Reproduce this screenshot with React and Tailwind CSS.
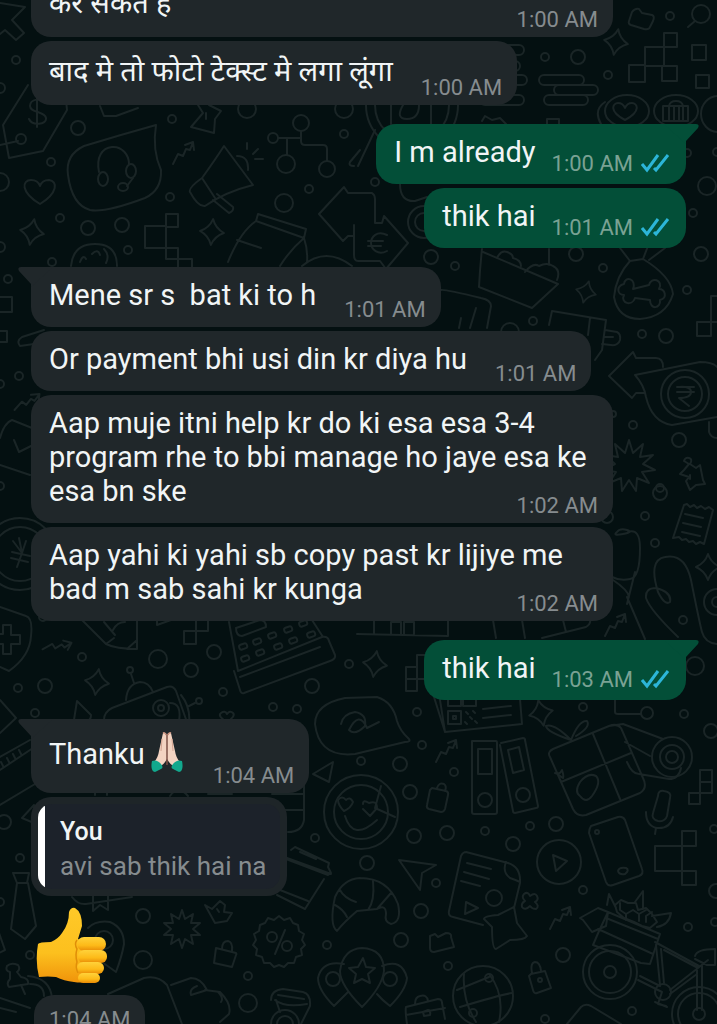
import clsx from "clsx";

const circles = [
  [16, 60, 4], [0, 88, 5], [78, 128, 7], [51, 162, 4], [21, 139, 5], [172, 119, 4],
  [170, 197, 4], [60, 218, 4], [88, 228, 7], [122, 225, 7], [128, 250, 4], [301, 123, 8],
  [273, 138, 5], [286, 164, 9], [327, 169, 8], [344, 134, 4], [309, 189, 4], [284, 203, 9],
  [247, 109, 9], [344, 109, 9], [0, 182, 9], [0, 247, 5], [52, 262, 4], [8, 279, 4],
  [19, 376, 4], [0, 384, 4], [0, 486, 4], [20, 554, 36], [20, 554, 27], [82, 657, 4],
  [158, 659, 9], [191, 670, 7], [214, 652, 7], [18, 688, 4], [45, 686, 7], [223, 692, 4],
  [273, 707, 4], [297, 709, 4], [349, 664, 4], [312, 686, 7], [35, 713, 4], [43, 617, 4],
  [130, 670, 3], [161, 708, 8], [161, 708, 3], [199, 701, 3], [128, 728, 8],
  [660, 493, 7], [645, 516, 4], [607, 517, 6], [655, 543, 4], [683, 620, 4], [695, 666, 9],
  [417, 712, 4], [583, 707, 4], [684, 714, 4], [647, 713, 6], [717, 602, 13], [717, 602, 5],
  [670, 16, 4], [701, 14, 9], [545, 57, 4], [578, 57, 7], [608, 75, 4], [687, 153, 4],
  [707, 186, 9], [693, 213, 4], [375, 182, 4], [717, 152, 4], [424, 222, 9], [424, 222, 16],
  [412, 105, 46], [412, 105, 37], [431, 257, 7], [455, 266, 4], [576, 254, 7], [603, 268, 4],
  [701, 254, 7], [687, 290, 4], [533, 321, 4], [642, 334, 4], [666, 336, 7], [633, 425, 4],
  [679, 440, 7], [510, 332, 9], [613, 414, 3], [660, 488, 4], [685, 394, 24], [685, 394, 17],
  [422, 745, 4], [400, 764, 7], [361, 761, 4], [454, 772, 4], [410, 792, 7], [447, 833, 7],
  [414, 836, 7], [485, 831, 4], [530, 826, 4], [556, 824, 7], [513, 844, 7], [367, 863, 7],
  [436, 883, 4], [421, 911, 7], [583, 890, 4], [401, 940, 7], [448, 966, 4], [563, 955, 7],
  [688, 927, 4], [632, 1011, 4], [545, 1019, 4], [711, 731, 7], [714, 829, 4], [716, 891, 7],
  [715, 922, 4], [4, 822, 7], [20, 858, 4], [315, 838, 4], [143, 916, 7], [143, 960, 9],
  [248, 976, 4], [248, 1003, 9], [327, 945, 4], [30, 955, 4], [0, 902, 4],
  [485, 800, 7], [523, 795, 7], [672, 757, 20], [672, 757, 12], [672, 757, 6],
  [361, 812, 37], [361, 812, 27], [494, 898, 8], [559, 862, 22], [272, 937, 5], [287, 946, 5],
  [610, 972, 27], [610, 972, 21], [610, 972, 6], [699, 1014, 27], [699, 1014, 21], [699, 1014, 6],
  [483, 996, 30], [489, 978, 4], [473, 1013, 4], [390, 979, 7], [333, 979, 7], [663, 992, 8],
  [285, 1024, 14], [285, 1024, 8], [104, 940, 9], [540, 980, 2], [597, 832, 2],
];

const sparkles = [
  "translate(32 232) rotate(10)", "translate(212 232) rotate(5)", "translate(616 42) rotate(10)",
  "translate(586 292) scale(.85) rotate(15)", "translate(97 682) rotate(8)",
  "translate(375 664) rotate(8)", "translate(541 713) rotate(-12)", "translate(708 567)",
];

const squares = [
  [145, 226, 21, 22], [166, 214, 12, 13], [166, 248, 12, 11], [178, 259, 14, 12],
  [-6, 297, 18, 15], [-6, 331, 13, 11], [184, 631, 12, 13], [196, 618, 12, 13],
  [664, 33, 13, 14], [645, 47, 19, 19], [629, 65, 16, 17], [662, 66, 15, 15],
  [692, 45, 14, 15], [696, 75, 13, 13], [547, 119, 12, 12], [697, 322, 14, 14],
  [711, 296, 12, 26], [406, 667, 11, 12], [406, 679, 11, 12], [417, 655, 12, 24],
  [448, 711, 13, 13], [453, 716, 3, 3], [448, 693, 13, 13], [463, 693, 13, 13],
  [700, 770, 12, 12], [700, 782, 12, 11], [689, 793, 11, 11],
  [655, 846, 27, 25], [682, 831, 14, 15], [682, 871, 14, 14], [682, 846, 0, 25],
];

const trendArrows = [
  "translate(183 153)", "translate(57 646) rotate(35)", "translate(615 625)",
  "translate(446 751)", "translate(560 918)", "translate(27 402) rotate(15)",
];

const doodles = [
  // cursor, price tag, paper
  "M0 3L25 7L12 20L24 33L16 40L5 30L0 34",
  "M28 85L3 125L9 158L43 151L67 110L66 100M45 103c-3-6-15-4-15 3s15 5 16 12-14 8-17 1M37 97v30M0 145L18 141",
  "M100 106l4 10h12l22-8M198 105l5 8-12 14 23 6 1-14 6-8-12-6M206 113v6",
  // headset in a speech bubble
  "M156 125Q120 135 84 146Q65 155 68 175Q72 205 90 210Q105 213 145 198Q162 190 161 170Q152 150 156 125Z",
  "M99 172c-3-15 3-24 13-25s17 8 17 17M133 178l-6 8",
  "M40 204C20 192 22 180 31 180Q38 180 40 186Q42 180 49 180C58 181 58 193 40 204Z",
  // megaphone
  "M224 146L253 185Q225 192 205 206Q198 207 190 192Q188 188 202 178Q215 160 224 146ZM202 178L215 198M213 200l16 13q5-2 4-6l-16-13M237 156q12 0 11 14M247 143v6M258 149l-5 5M255 159h8",
  // network
  "M278 138h23M287 139v16M301 131v10q0 4 4 4h18q4 0 4 4v12M360 150l-10 12q-2 4 4 4",
  // jar and arrows
  "M258 214L306 229L304 238L256 221ZM256 221Q240 232 228 262M304 238Q290 250 280 266M237 240l24 8M304 238q4 12 3 24M302 266q24-20 50 0",
  "M360 193H348L344 187L319 214L343 241L348 236H354M360 193h12q3 2 3 6v24h7l2-7 24 27-22 26-6-8H358q-4 0-4-6v-30M387 235c-10-5-16 2-16 8s7 13 16 8M368 241h15M368 246h13",
  "M71 266q2-22 24-22t22 22M80 262q3-8 6-3M92 254q6-6 8 1M104 249q6 6 2 14",
  "M44 330L22 337q-6 4-2 9l14-2M0 438q4-15 12-18l20 8M14 440l5 12 20-10M0 465l30 10",
  // yen and shield
  "M19 538l3 15M13 541l9 12 4-12M22 553l-5 14M12 552l18 4M11 558l17 4",
  "M0 607l26 9q7 2 5 20q-1 20-22 35L0 667M-3 634h6v-9h8v10h9v9h-9v10h-8v-10h-6",
  "M82 620l24 24q10 5 31 5v-29M106 644l8-6M127 649l10-9M104 622l11 13M113 630q4-8 12-8M157 620v5l14-5",
  // cash register
  "M229 622l9 49M238 671l84-34q6-1 7 4l6 14q1 4-5 6l-86 32q-3 1-4-3l-6-19M312 620l11 17M240 677l80-30M236 628l24-8q6 0 6 7l-24 9q-6 0-6-8",
  // robot, triangle
  "M77 701l14 14q0 5-4 6l-14 5ZM104 720q0-8 8-12l55-21q6-2 9 4l12 34M131 674l3 9M126 700q1-16 14-18q9 0 13 10M170 703q12 0 9 18M181 695q10 12 8 30M189 706l6-3M0 700l16 18-16 15",
  "M227 722q-10-6-6-9t6 1q3-4 6-1t-6 9",
  // folder, search
  "M632 12q3-4 7-3l3 4 10 2q3 1 1 6l-3 6q-1 3-6 2l-13-4q-3-1-2-4ZM695 21l-7 6",
  "M625 120c-17-9-12-17-7-17q5 0 7 5q2-5 7-5c5 0 10 8-7 17M663 106h25v15h-25ZM669 121v-15q1-5 7-5t7 5v15M674 106v15M679 106v15M601 124q-8-14 4-22M391 105v20h40v-20M403 105q-8 14 4 14t12-14M375 130l-17 36M482 121l3-5 7 4 8-2 6 6",
  "M400 184q0 18 15 17l12-4",
  // basket, books, bottle, mug
  "M483 252l75 32-26 24-53-21q1-20 3-38M497 258q4-8 10-6t6 6q8 2 8 8M525 272q8-10 14-6 8-4 14 0 8 4 4 14M549 249v16",
  "M441 290q3-1 40 8q10 2 10 8l-4 22M461 318l-2 10M476 308l-6 20",
  "M620 248l10 13M648 246l-5 13M665 248l-16 12M630 261q-14 15-16 36q4 22 26 22q26-2 33-25q-2-18-30-35l-13 2",
  "M633 289c4-10-8-14-9-5-8 2-7 11 0 11-4 8 8 12 11 3l15 2c0 10 11 9 10 0 8-2 5-11-1-11 5-9-8-13-10-4Z",
  "M549 325l3-14 54 9-4 30-7 10M590 318l-2 17M605 330l12 2q4 2 3 8q-2 6-9 5l-9-1M605 337h8",
  "M644 393h-8l-4 5-23-22 24-24 3 6h20q7 0 7 9M635 375L700 362Q713 362 717 367M635 375q9 10 11 22q6 25 26 28L717 417M677 387h17M677 392h17M679 387q12-1 12 5q0 6-12 6l10 8M709 422v10q2 6 8 6",
  "M684 470l5-6-5-3q1-4 5-3t1 6l6 4 4-3 3 15 2 4-9 1-6 5-4-9 3-4-9-3ZM690 475v4",
  // receipt, lace
  "M684 505l3-1 3 3 4-2 3 3 4-2 4 3 4-2 4 3-9 34-4-2-4 2-3-3-4 1-3-3-4 1-3-3-6 1ZM685 514l18 4M683 523l18 4M682 532l18 4",
  "M628 532q12-4 12 16q0 30-10 31q-10 2-18-2M613 580q15 10 16 17M635 572l-8 32M627 597l18 42M617 532q3-4 10-2t-4 4-6-2",
  "M678 637Q650 610 646 598Q645 588 656 588Q672 592 670 602Q665 606 658 592Q648 560 665 557Q685 553 691 580Q700 625 702 632Q705 643 717 644",
  "M357 634l91 2V620M374 620v14M391 634v-12h10v12M404 634v-12h10v12M493 620l3 18M522 620l3 18M563 620l3 12M542 638l44-11q5-3 4-7",
  // card with code
  "M434 697l11 35 77-8-2-25M440 700l5 32M483 709l28-3M483 718l28-3M466 712l2 2M473 711l2 2M470 717l2 2M465 722l2 2M475 721l2 2M615 699v13q0 2 3 2h23",
  // abstract bubble above the donut
  "M315 724q0-20 30-26l32-1q16 5 20 24q3 10 12 18q2 3-4 3l-50 12q-36 4-40-30M341 724q2-10 14-12 12 2 10 14-10 10-16 4 10-20 18-2l12-6",
  // binders
  "M472 741h24q1 0 1 2v69q0 2-2 2h-21q-2 0-2-2ZM478 749h14v25h-14ZM501 743l22-5q2 0 2 2l13 66q0 2-2 2l-21 5q-2 0-2-2l-13-66M508 750l11-3 5 23-11 3Z",
  // gift
  "M550 757q-3-5 3-8l56-23q8-3 12 2l22 50q5 10-3 15l-54 22q-9 2-13-6ZM561 782l70-29M593 734l27 65M571 740q-24-8-25-14 8-3 25 14q8-20 16-19 4 6-11 15M609 726l14-2 40 15M625 742l25 14M627 762q5 12 12 12l30 5q10 0 12-11",
  "M555 773q5 2 7-3 2 6 1 8-5-3-6-5M658 796q0-6 6-5 8 1 6 7l-3 18q-2 6-9 5-7-2-5-8ZM646 812q0 14 11 16 13 1 16-11M656 828l-1 6",
  "M580 796q-6-4 0-14 8-10 16-6 6 6-4 20-6 8-12 0",
  // lock, play, phone
  "M432 788l14 3q3 1 2 4l-3 14q-1 3-4 3l-12-3q-3-1-2-4l3-15ZM437 788q2-6 7-4 3 2 1 7",
  "M553 855l14 6-11 10ZM591 826l27-9q5-1 7 3l17 49q2 5-3 7l-26 9q-5 2-7-3l-17-49q0-4 2-7ZM618 871q1-4 8-3 4 2-1 6-6 1-7-3",
  "M399 860l37 5-14 8-2 17Z",
  // document and star
  "M466 852q-3 0-5 4l-12 55q-1 5 4 6l30 8M466 852l42 11q13 4 12 20l-6 25M506 862q-4 10 4 16 6 2 10 4M467 863l24 6M464 872l25 7M461 881l19 5M466 902l12 6-13 6Z",
  "M514 907l3 16 10 13q-2 4-17 4l-14 9q-4 0-4-22l-8-8q0-3 14-4Z",
  "M524 894q4-3 6 2 5-4 7 0t-2 6q5 4 1 7-4 0-6-3-5 5-8 1-1-4 3-6-4-4-1-7",
  "M430 936l5-2 3 3 8-4q6 0 5 4l3 10-20 5q-4 0-4-4ZM531 974l14-3 6 17-14 5q-3 1-4-3l-4-14ZM532 973q-2-10 3-11 5 0 6 9",
  // croissant
  "M360 878q28 0 38 26 4 18-7 20-7-2-5-10 0-10-9-5l-20 2q-14 12-20 20-8-6-2-34 8-18 25-19M373 881q2 20-5 29M391 893l-14 16M340 890q4 8 16 12M335 905q8 4 12 12",
  // map pins and star
  "M362 1007q-22-22-22-36 3-22 22-23 22 1 22 23-2 16-22 36M363 958l3 9 9 1-7 6 2 9-8-4-8 4 2-9-7-6 9-1ZM382 966q20-8 25 12-1 12-17 28-8-6-13-12M344 964q-22-4-26 14 0 12 16 28 8-8 14-14",
  "M406 1007l32-8q4 0 4 4l3 16M406 1007q-1 3 1 17M415 1004q0-7 5-8 7-2 8 5M406 1015l39-7M423 1012l5-2q3 1 2 5l-6 1Z",
  // globe
  "M464 974q-2 26 12 48M489 974q16 20 10 48M457 990l32-13M460 1007q40-12 52-14",
  "M567 1024l14-17q4-4 10-1l30 18",
  // cart with fruit and bicycle
  "M580 918l18-10 10 4-2 14-14 6-9-12ZM608 912l52 22-10 30-9-1-48-18 6-14ZM598 929l55 25M606 918l52 21M607 905l2-11 7 14M635 902l8-11v18M652 916l19-3q-2 12-14 14M615 905l6-5 7 3 8 0 2 7 8-2 6 6 5 8-7 6-8-2-8-4-10-4-7-6Z",
  "M620 903v7l6 4 7-4M626 914v6M633 910l6 4v7M639 914l7-4M646 922v-6l6-4",
  "M638 980l24 12M640 976l20 10M656 945l4 40M661 949l3 34M655 942l44 24M664 950l34 18-28 22M697 974l-27 20M697 966v44M702 966v44M698 968l10-8M695 956q2-7 20-7v16l-8 0-12-6M662 992l-4 12 8 2M655 1002l12 5",
  // left edge ruler, tie, pushpin
  "M0 757l30-17M0 770l36-24M3 766l-2-4M9 762l-2-4M15 758l-2-4M21 754l-2-4M0 805l40-24M22 818l12-13v18Z",
  "M13 873h16l-2 10H17ZM17 883l-6 46 14 10 11-13-8-43M-2 930l7 20-6 3",
  "M7 966q4-4 11-1 3 4-1 7l4 5q8 1 7 7l-19 3q-3-4 1-8l0-7q-5-1-3-6M21 985l4 9M28 976q22 2 24 22M30 984q14 0 14 12M0 998l30 10M0 1008l16 4",
  // bookmark, pin, boot
  "M72 897q6 8 14 7l46-7M93 896v15l7-6 8 5v-15M88 928q8-8 22-6 14 6 14 22-2 12-8 28l-14-10",
  "M108 994l36-16q14-3 23 7l15 39M171 985l20-7q10 0 16 12l-16 5q-2-6 6-9M205 990l15 2q12 12 9 22l-9 8M218 992q6 6 3 10",
  "M205 905l7 4 8-8 5 4-1 7 8 1-5 8-12 2ZM217 909l2 3",
  "M216 948l20 5q1 1 0 2l-4 12-18-4ZM222 949q0-8 6-8 5 1 4 10",
  "M285 930l-10 24",
  // coffee cup
  "M291 850l4-3 34 16-1 4 3 6-3 2-42-16M287 858l44 16M324 879l-19 30-28-14M280 890l28 11M272 794h32M272 810h32M304 785v35q-2 12-16 12M300 852l16 7",
  "M271 1000q0-10 12-11l20 3q8 2 7 14l-9 18M275 1000q10 8 32 4M278 995l26 4M276 1000l4 12M313 774l20-12-4 20Z",
  "M338 800q4-5 8 0 4-4 7 2-2 6-9 9-6-6-6-11M363 804q0-5 6-1 8-3 8 5l-7 8-7-7M345 816q8 26 32 4M381 786l-6 22 20 9",
  "M95 780v15M107 780v15M170 796q8-12 18 0M208 794h24",
];

const keys = [
  [243, 646], [257, 641], [272, 635], [288, 629], [303, 623],
  [245, 658], [260, 652], [278, 646], [293, 640], [311, 634],
];

const pills = [
  [539, 75, 45], [554, 85, 44], [544, 95, 44], [480, 45, 44], [480, 61, 40], [480, 75, 47], [480, 95, 44],
];

const burst = (cx, cy, outer, inner, points) =>
  Array.from({ length: points * 2 }, (_, i) => {
    const r = i % 2 ? inner : outer;
    const a = (i * Math.PI) / points - Math.PI / 2;
    return `${Math.round(cx + r * Math.cos(a))},${Math.round(cy + r * Math.sin(a))}`;
  }).join(" ");

const Wallpaper = () => {
  return (
    <svg
      aria-hidden="true"
      viewBox="0 0 717 1024"
      preserveAspectRatio="xMidYMin slice"
      className="col-start-1 row-start-1 w-full h-full fill-none stroke-[#1a2526] stroke-2"
      strokeLinejoin="round"
      strokeLinecap="round"
    >
      {circles.map(([cx, cy, r], i) => (
        <circle key={i} cx={cx} cy={cy} r={r} />
      ))}
      {squares.map(([x, y, w, h], i) => (
        <path key={i} d={`M${x} ${y}h${w}v${h}h${-w}Z`} />
      ))}
      {sparkles.map((t) => (
        <path key={t} transform={t} d="M0-13Q3-4 12 0Q3 4 0 13Q-3 4-12 0Q-3-4 0-13Z" />
      ))}
      {trendArrows.map((t) => (
        <path key={t} transform={t} d="M-10 11l5-10 5 2 3-7 4 1 3-8M2-8l8-3 1 8" />
      ))}
      {keys.map(([x, y]) => (
        <rect key={x} x={x - 4} y={y - 2} width="8" height="5" rx="2" transform={`rotate(-20 ${x} ${y})`} />
      ))}
      {pills.map(([x, y, w]) => (
        <rect key={`${x}-${y}`} x={x} y={y} width={w} height="10" rx="5" />
      ))}
      <ellipse cx="103" cy="179" rx="5" ry="7" />
      <ellipse cx="131" cy="171" rx="5" ry="7" />
      <ellipse cx="123" cy="187" rx="5" ry="4" />
      <ellipse cx="627" cy="111" rx="22" ry="16" />
      <ellipse cx="676" cy="111" rx="22" ry="16" />
      <ellipse cx="718" cy="114" rx="17" ry="18" />
      <polygon points={burst(629, 466, 26, 14, 11)} />
      <polygon points={burst(182, 929, 19, 11, 10)} />
      <polygon points={burst(279, 942, 26, 23, 15)} />
      {doodles.map((d) => (
        <path key={d} d={d} />
      ))}
    </svg>
  );
};

const Ticks = () => {
  return (
    <svg
      role="img"
      aria-label="Read"
      viewBox="0 0 29 20"
      className="w-[29px] h-5 fill-none stroke-[#2cb5d8] stroke-3"
    >
      <path d="M1 10l5 6L17 1M13 14l2 2L27 1" />
    </svg>
  );
};

const Tail = ({ out }) => {
  return (
    <svg
      aria-hidden="true"
      viewBox="0 0 34 20"
      className={clsx(
        "absolute top-0 w-[34px] h-5",
        out ? "-right-[13px] -scale-x-100 fill-[#034f38]" : "-left-[13px] fill-[#20272a]"
      )}
    >
      <path d="M3 0H34V1L13 20V17L1 4Q-1 0 3 0Z" />
    </svg>
  );
};

const FoldedHands = () => {
  return (
    <svg role="img" aria-label="Folded hands" viewBox="0 0 36 42" className="inline-block w-9 h-[42px] ml-1 -mt-2">
      <path d="M14 2Q17 1 18 4V28Q14 35 9 36L5 31Q9 27 10 20Z" fill="#f3d3c1" />
      <path d="M22 2Q19 1 18 4V28Q22 35 27 36L31 31Q27 27 26 20Z" fill="#f3d3c1" />
      <path d="M18 3V34" fill="none" stroke="#7d5145" strokeWidth="1.5" />
      <path d="M13 8l-1 12M23 8l1 12" fill="none" stroke="#d3a592" strokeWidth="1" />
      <path d="M14 2q2-1 3 2M22 2q-2-1-3 2" fill="none" stroke="#c68f7d" strokeWidth="1.5" />
      <path d="M3 30Q8 28 12 33Q15 37 12 38L6 41Q1 40 3 30Z" fill="#12a88d" />
      <path d="M33 30Q28 28 24 33Q21 37 24 38L30 41Q35 40 33 30Z" fill="#12a88d" />
    </svg>
  );
};

const ThumbsUp = () => {
  return (
    <svg role="img" aria-label="Thumbs up" viewBox="0 0 72 78" className="w-[72px] h-[78px]">
      <defs>
        <linearGradient id="skin" x1="0" y1="0" x2="0" y2="1">
          <stop offset="0" stopColor="#ffc928" />
          <stop offset="0.6" stopColor="#fcc01e" />
          <stop offset="1" stopColor="#f0930a" />
        </linearGradient>
        <linearGradient id="finger" x1="0" y1="0" x2="0" y2="1">
          <stop offset="0" stopColor="#ffd23a" />
          <stop offset="0.6" stopColor="#fdba18" />
          <stop offset="1" stopColor="#e88a05" />
        </linearGradient>
      </defs>
      <path
        d="M2 37Q3 35 15 35Q22 32 26 26Q33 17 33 5Q35 0 39 1Q46 5 46 19L42 32L58 40V72Q50 77 38 75Q28 74 20 70Q12 69 3 70Q-1 54 2 37Z"
        fill="url(#skin)"
      />
      <rect x="41" y="30" width="29" height="14" rx="7" fill="url(#finger)" />
      <rect x="42" y="43" width="29" height="13" rx="6" fill="url(#finger)" />
      <rect x="41" y="55" width="27" height="12" rx="6" fill="url(#finger)" />
      <rect x="42" y="66" width="22" height="10" rx="5" fill="url(#finger)" />
      <path d="M41 33Q38 37 41 42Q39 48 41 55Q39 60 42 66" fill="none" stroke="#e08e08" strokeWidth="1.5" />
    </svg>
  );
};

const sizes = {
  base: { text: "leading-[34px]", time: "mt-[19px]" },
  hindi: { text: "leading-[38px]", time: "mt-[23px]" },
  emoji: { text: "leading-[48px]", time: "mt-[33px]" },
};

const Bubble = ({ out, tail, wide, time, size = "base", children }) => {
  return (
    <li
      className={clsx(
        "relative max-w-[582px] rounded-[20px] pt-[11px] pl-[18px] flow-root",
        out ? "self-end bg-[#034f38] pr-4 pb-[7px]" : "self-start bg-[#20272a] pr-[15px] pb-1",
        tail ? "mt-[19px]" : "mt-1",
        wide && "w-full"
      )}
    >
      {tail && <Tail out={out} />}
      <span className={clsx("relative text-[29px] text-[#f1f5f6] whitespace-pre-wrap", sizes[size].text)}>
        {children}
      </span>
      <span
        className={clsx(
          "float-right flex items-center gap-2 text-[22px] leading-[26px]",
          out ? "mt-4 ml-4 text-[#7aa294]" : ["ml-7 text-[#868c8f]", sizes[size].time]
        )}
      >
        <time>{time}</time>
        {out && <Ticks />}
      </span>
    </li>
  );
};

export default function App() {
  return (
    <main className="grid grid-rows-1 h-screen overflow-hidden bg-[#041011] font-[Roboto,'Noto_Sans',sans-serif]">
      <Wallpaper />
      <ul className="col-start-1 row-start-1 min-h-0 -mt-[31px] flex flex-col px-[31px]">
        <Bubble wide size="hindi" time="1:00 AM">कर सकते हैं</Bubble>
        <Bubble size="hindi" time="1:00 AM">
          बाद मे तो फोटो टेक्स्ट मे लगा लूंगा
        </Bubble>
        <Bubble out tail time="1:00 AM">I m already</Bubble>
        <Bubble out time="1:01 AM">thik hai</Bubble>
        <Bubble tail time="1:01 AM">{"Mene sr s  bat ki to h"}</Bubble>
        <Bubble time="1:01 AM">Or payment bhi usi din kr diya hu</Bubble>
        <Bubble time="1:02 AM">
          Aap muje itni help kr do ki esa esa 3-4 program rhe to bbi manage ho jaye esa ke esa bn ske
        </Bubble>
        <Bubble time="1:02 AM">
          Aap yahi ki yahi sb copy past kr lijiye me bad m sab sahi kr kunga
        </Bubble>
        <Bubble out tail time="1:03 AM">thik hai</Bubble>
        <Bubble tail size="emoji" time="1:04 AM">
          Thanku
          <FoldedHands />
        </Bubble>
        <li className="mt-1 flex flex-col items-start">
          <blockquote className="rounded-[20px] bg-[#1e2528] p-[7px]">
            <div className="rounded-[14px] overflow-hidden bg-[#1c222a] flex">
              <div className="w-[7px] bg-white"></div>
              <div className="pt-[11px] pb-[5px] pl-[15px] pr-[14px]">
                <p className="text-[25px] leading-[34px] font-medium text-[#f1f5f6]">You</p>
                <p className="text-[26px] leading-[35px] text-[#868c8f]">avi sab thik hai na</p>
              </div>
            </div>
          </blockquote>
          <div className="mt-[11px] ml-[5px]">
            <ThumbsUp />
          </div>
          <time className="mt-[10px] ml-[3px] rounded-[20px] bg-[#20272a] px-[15px] py-3 text-[22px] leading-[26px] text-[#868c8f]">
            1:04 AM
          </time>
        </li>
      </ul>
    </main>
  );
}
